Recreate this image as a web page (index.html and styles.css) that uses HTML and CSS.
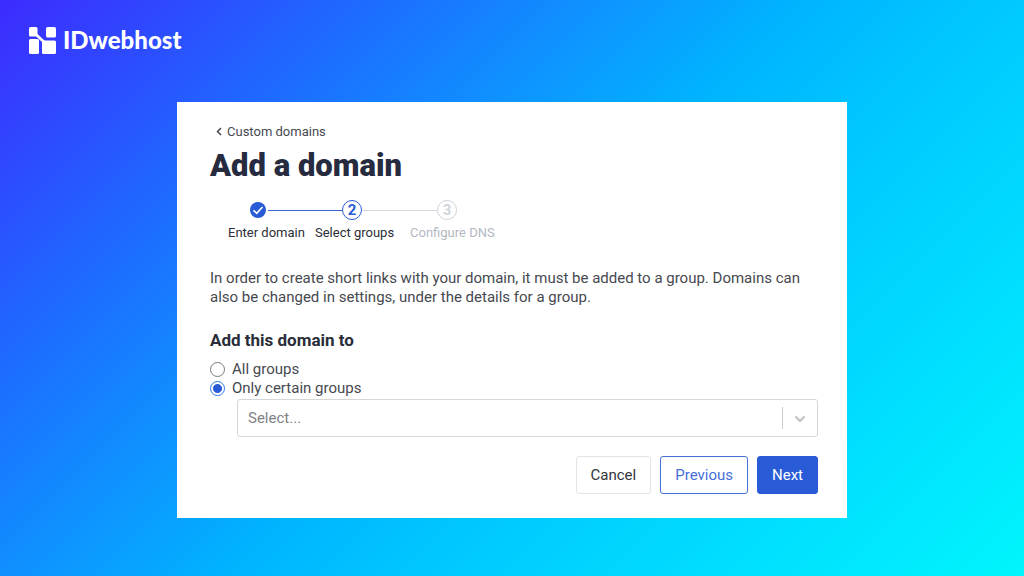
FILE: index.html
```html
<!DOCTYPE html>
<html lang="en">
<head>
<meta charset="utf-8">
<meta name="viewport" content="width=device-width, initial-scale=1">
<title>Add a domain</title>
<link rel="stylesheet" href="styles.css">
</head>
<body class="page">
<header class="brand">
  <svg class="brand-mark" viewBox="0 0 27 27" aria-hidden="true">
    <g fill="currentColor">
      <rect x="0" y="0" width="8.500" height="9.500" rx="1.500"/>
      <rect x="17" y="0" width="10" height="10.500" rx="1.500"/>
      <rect x="0" y="12" width="10" height="15" rx="1.500"/>
      <rect x="13" y="13.500" width="14" height="13.500" rx="1.500"/>
    </g>
    <path d="M6.500 7 15 15" fill="none" stroke="currentColor" stroke-width="2.800"/>
  </svg>
  <span class="brand-name">IDwebhost</span>
</header>
<main class="card">
  <a class="back" href="#">
    <svg class="back-icon" viewBox="0 0 6 9" aria-hidden="true"><path d="M5 1 1.500 4.500 5 8" fill="none" stroke="currentColor" stroke-width="1.500"/></svg>
    Custom domains
  </a>
  <h1 class="title">Add a domain</h1>
  <ol class="steps">
    <li class="step step-done">
      <span class="dot"><svg class="check" viewBox="0 0 16 16" aria-hidden="true"><circle cx="8" cy="8" r="8" fill="currentColor"/><path d="M3.500 8.300 6.700 11.300 12.500 5" fill="none" stroke="#fff" stroke-width="1.600"/></svg></span>
      <span class="step-label">Enter domain</span>
    </li>
    <li class="step step-current" aria-current="step">
      <span class="dot dot-ring">2</span>
      <span class="step-label">Select groups</span>
    </li>
    <li class="step step-next">
      <span class="dot dot-ring">3</span>
      <span class="step-label">Configure DNS</span>
    </li>
  </ol>
  <p class="intro">In order to create short links with your domain, it must be added to a group. Domains can also be changed in settings, under the details for a group.</p>
  <form class="form">
    <fieldset class="groups">
      <legend class="legend">Add this domain to</legend>
      <label class="option"><input class="radio" type="radio" name="scope">All groups</label>
      <label class="option"><input class="radio" type="radio" name="scope" checked>Only certain groups</label>
      <div class="picker">
        <select class="select" aria-label="Groups"><option>Select...</option></select>
        <svg class="chevron" viewBox="0 0 12 8" aria-hidden="true"><path d="M1.500 1.500 6 6 10.500 1.500" fill="none" stroke="currentColor" stroke-width="2"/></svg>
      </div>
    </fieldset>
    <div class="actions">
      <button class="button" type="button">Cancel</button>
      <button class="button button-outline" type="button">Previous</button>
      <button class="button button-primary" type="submit">Next</button>
    </div>
  </form>
</main>
</body>
</html>
```
FILE: styles.css
```css
* { box-sizing: border-box; }
.page {
  margin: 0;
  min-height: 100vh;
  font: 15px/19px Roboto, "Liberation Sans", sans-serif;
  color: #46494f;
  background: linear-gradient(135deg, #3d2bff 0%, #1f68ff 22%, #0e94ff 38%, #00b4ff 50%, #00caff 64%, #00e2ff 84%, #00f5fc 100%);
}
.brand {
  display: flex;
  align-items: center;
  gap: 7px;
  padding: 26px 29px 0;
  height: 54px;
  color: #fff;
}
.brand-mark { width: 27px; height: 27px; }
.brand-name { font: 900 24px/28px Lato, sans-serif; }
.card {
  width: calc(100% - 48px);
  max-width: 670px;
  margin: 48px auto;
  padding: 20px 29px 24px 33px;
  background: #fff;
}
.back {
  display: flex;
  align-items: center;
  gap: 5px;
  margin-left: 6px;
  font-size: 13px;
  color: #46494f;
  text-decoration: none;
}
.back-icon { width: 6px; height: 9px; }
.title {
  margin: 9px 0 18px;
  font-size: 31px;
  line-height: 32px;
  font-weight: 900;
  color: #262b40;
}
.steps {
  display: flex;
  margin: 0 0 27px 18px;
  padding: 0;
  list-style: none;
  font-size: 13px;
}
.step {
  position: relative;
  width: 95px;
}
.step-done { width: 87px; }
.step + .step::before {
  content: "";
  position: absolute;
  top: 10px;
  left: -47px;
  width: 74px;
  border-top: 1px solid #3b66d0;
}
.step.step-next::before { border-color: #d3d6de; }
.dot {
  display: flex;
  align-items: center;
  justify-content: center;
  width: 20px;
  height: 20px;
  margin: 0 0 3px 27px;
  color: #2a5bd7;
  font-size: 15px;
  font-weight: 700;
}
.step-done .dot { margin-left: 20px; }
.dot-ring { border: 1px solid currentColor; border-radius: 50%; }
.check { width: 16px; height: 16px; }
.step-label { display: block; white-space: nowrap; color: #2c2f36; }
.step-next .dot { color: #cfd3db; }
.step-next .step-label { color: #b3b8c2; }
.intro { margin: 0 0 24px; }
.form { margin: 0; }
.groups { margin: 0; padding: 0; border: 0; min-width: 0; }
.legend {
  padding: 0 0 10px;
  font-size: 17px;
  font-weight: 700;
  color: #2a2d38;
}
.option { display: flex; align-items: center; gap: 7px; height: 19px; }
.radio {
  appearance: none;
  width: 15px;
  height: 15px;
  margin: 0;
  border: 1px solid #77797d;
  border-radius: 50%;
}
.radio:checked {
  border-color: #2a7be8;
  background: radial-gradient(circle, #2a5bd7 4px, #fff 5px);
}
.picker { position: relative; margin: 1px 0 19px 27px; }
.select {
  appearance: none;
  display: block;
  width: 100%;
  height: 38px;
  padding: 0 10px;
  border: 1px solid #d6d6d6;
  border-radius: 3px;
  background: #fff;
  font: inherit;
  color: #808285;
}
.picker::after {
  content: "";
  position: absolute;
  top: 8px;
  right: 35px;
  height: 22px;
  border-left: 1px solid #ccc;
}
.chevron {
  position: absolute;
  top: 16px;
  right: 12px;
  width: 12px;
  height: 8px;
  color: #bfbfbf;
  pointer-events: none;
}
.actions { display: flex; justify-content: flex-end; gap: 9px; }
.button {
  height: 38px;
  padding: 0 14px;
  border: 1px solid #e2e4e8;
  border-radius: 3px;
  background: #fff;
  font: inherit;
  color: #33363c;
}
.button-outline { border-color: #4670da; color: #4670da; }
.button-primary { border-color: #2a5bd7; background: #2a5bd7; color: #fff; }
```
